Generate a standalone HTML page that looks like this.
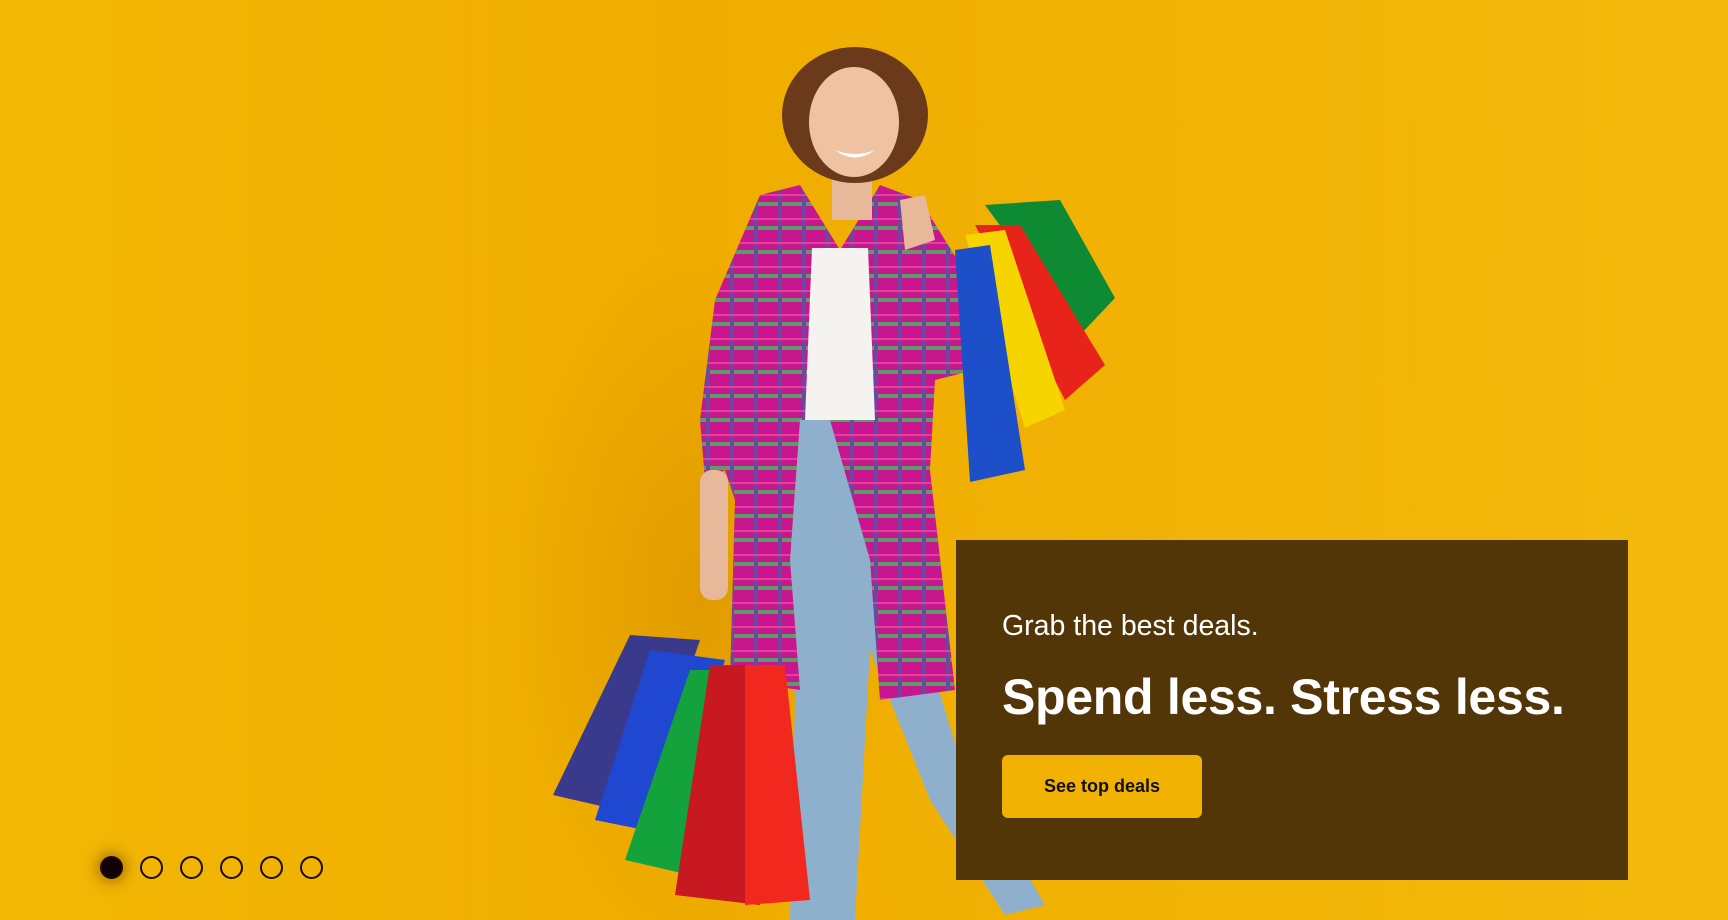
<!DOCTYPE html>
<html><head><meta charset="utf-8"><style>
html,body{margin:0;padding:0}
body{width:1728px;height:920px;overflow:hidden;position:relative;background:linear-gradient(90deg,#f2b705 0%,#f0ad00 40%,#f2b90c 100%);font-family:"Liberation Sans",sans-serif}
svg{position:absolute;left:0;top:0}
.box{position:absolute;left:956px;top:540px;width:672px;height:340px;background:#533608}
.s{position:absolute;left:46px;top:70px;color:#fff;font-size:28.5px}
.h{position:absolute;left:46px;top:128px;color:#fff;font-size:50px;font-weight:bold;letter-spacing:-0.3px}
.btn{position:absolute;left:46px;top:215px;width:200px;height:63px;background:#f2b203;border-radius:6px;color:#111;font-size:18px;font-weight:bold;text-align:center;line-height:63px}
.dot{position:absolute;top:856px;width:19px;height:19px;border:2.5px solid #1a0a05;border-radius:50%}
</style></head><body>
<svg width="1728" height="920" viewBox="0 0 1728 920">
<defs>
<pattern id="pl" width="24" height="24" patternUnits="userSpaceOnUse">
<rect width="24" height="24" fill="#c8168f"/>
<rect x="0" y="10" width="24" height="4" fill="#5e9a6a"/>
<rect x="10" y="0" width="4" height="24" fill="#6a4aa0"/>
<rect x="0" y="2" width="24" height="2" fill="#e0409e"/>
</pattern>
<radialGradient id="sh" cx="0.5" cy="0.5" r="0.5"><stop offset="0" stop-color="#c57a00" stop-opacity=".35"/><stop offset="1" stop-color="#c57a00" stop-opacity="0"/></radialGradient>
</defs>
<ellipse cx="700" cy="600" rx="200" ry="350" fill="url(#sh)"/>
<path d="M800 420 L880 420 L900 560 L960 760 L1045 905 L1005 915 L930 800 L870 650 L855 920 L790 920 L795 700 L790 560Z" fill="#8fb0cc"/>
<path d="M760 195 L800 185 L840 250 L880 185 L920 200 L970 280 L975 370 L935 380 L930 470 L955 690 L880 700 L870 560 L830 420 L800 420 L790 560 L800 690 L730 680 L735 500 L725 470 L705 480 L700 420 L715 300 Z" fill="url(#pl)"/>
<path d="M812 248 L868 248 L875 420 L805 420 Z" fill="#f5f3f0"/>
<rect x="700" y="470" width="28" height="130" rx="12" fill="#e8b89a"/>
<path d="M900 200 L925 195 L935 240 L905 250Z" fill="#e8b89a"/>
<rect x="832" y="160" width="40" height="60" fill="#e8b89a"/>
<ellipse cx="855" cy="115" rx="73" ry="68" fill="#6b3a1a"/>
<ellipse cx="854" cy="122" rx="45" ry="55" fill="#efc2a2"/>
<path d="M835 150 Q855 165 875 150 Q855 158 835 150Z" fill="#fff"/>
<path d="M985 205 L1060 200 L1115 298 L1080 335Z" fill="#0e8a32"/>
<path d="M975 225 L1020 225 L1105 365 L1065 400Z" fill="#e8241a"/>
<path d="M965 235 L1005 230 L1065 410 L1025 428Z" fill="#f5d400"/>
<path d="M955 250 L990 245 L1025 470 L970 482Z" fill="#1c4fc8"/>
<path d="M630 635 L700 640 L640 815 L553 795Z" fill="#3a3a8c"/>
<path d="M650 650 L725 660 L670 835 L595 820Z" fill="#1f47d0"/>
<path d="M690 670 L735 670 L690 875 L625 860Z" fill="#14a23c"/>
<path d="M710 665 L760 665 L760 905 L675 895Z" fill="#c81822"/>
<path d="M745 665 L785 665 L810 900 L745 905Z" fill="#f0281e"/>
</svg>
<div class="box">
<div class="s">Grab the best deals.</div>
<div class="h">Spend less. Stress less.</div>
<div class="btn">See top deals</div>
</div>
<div class="dot" style="left:100px;background:#120008;box-shadow:0 0 12px 4px rgba(120,70,0,.5)"></div>
<div class="dot" style="left:140px"></div>
<div class="dot" style="left:180px"></div>
<div class="dot" style="left:220px"></div>
<div class="dot" style="left:260px"></div>
<div class="dot" style="left:300px"></div>
</body></html>
